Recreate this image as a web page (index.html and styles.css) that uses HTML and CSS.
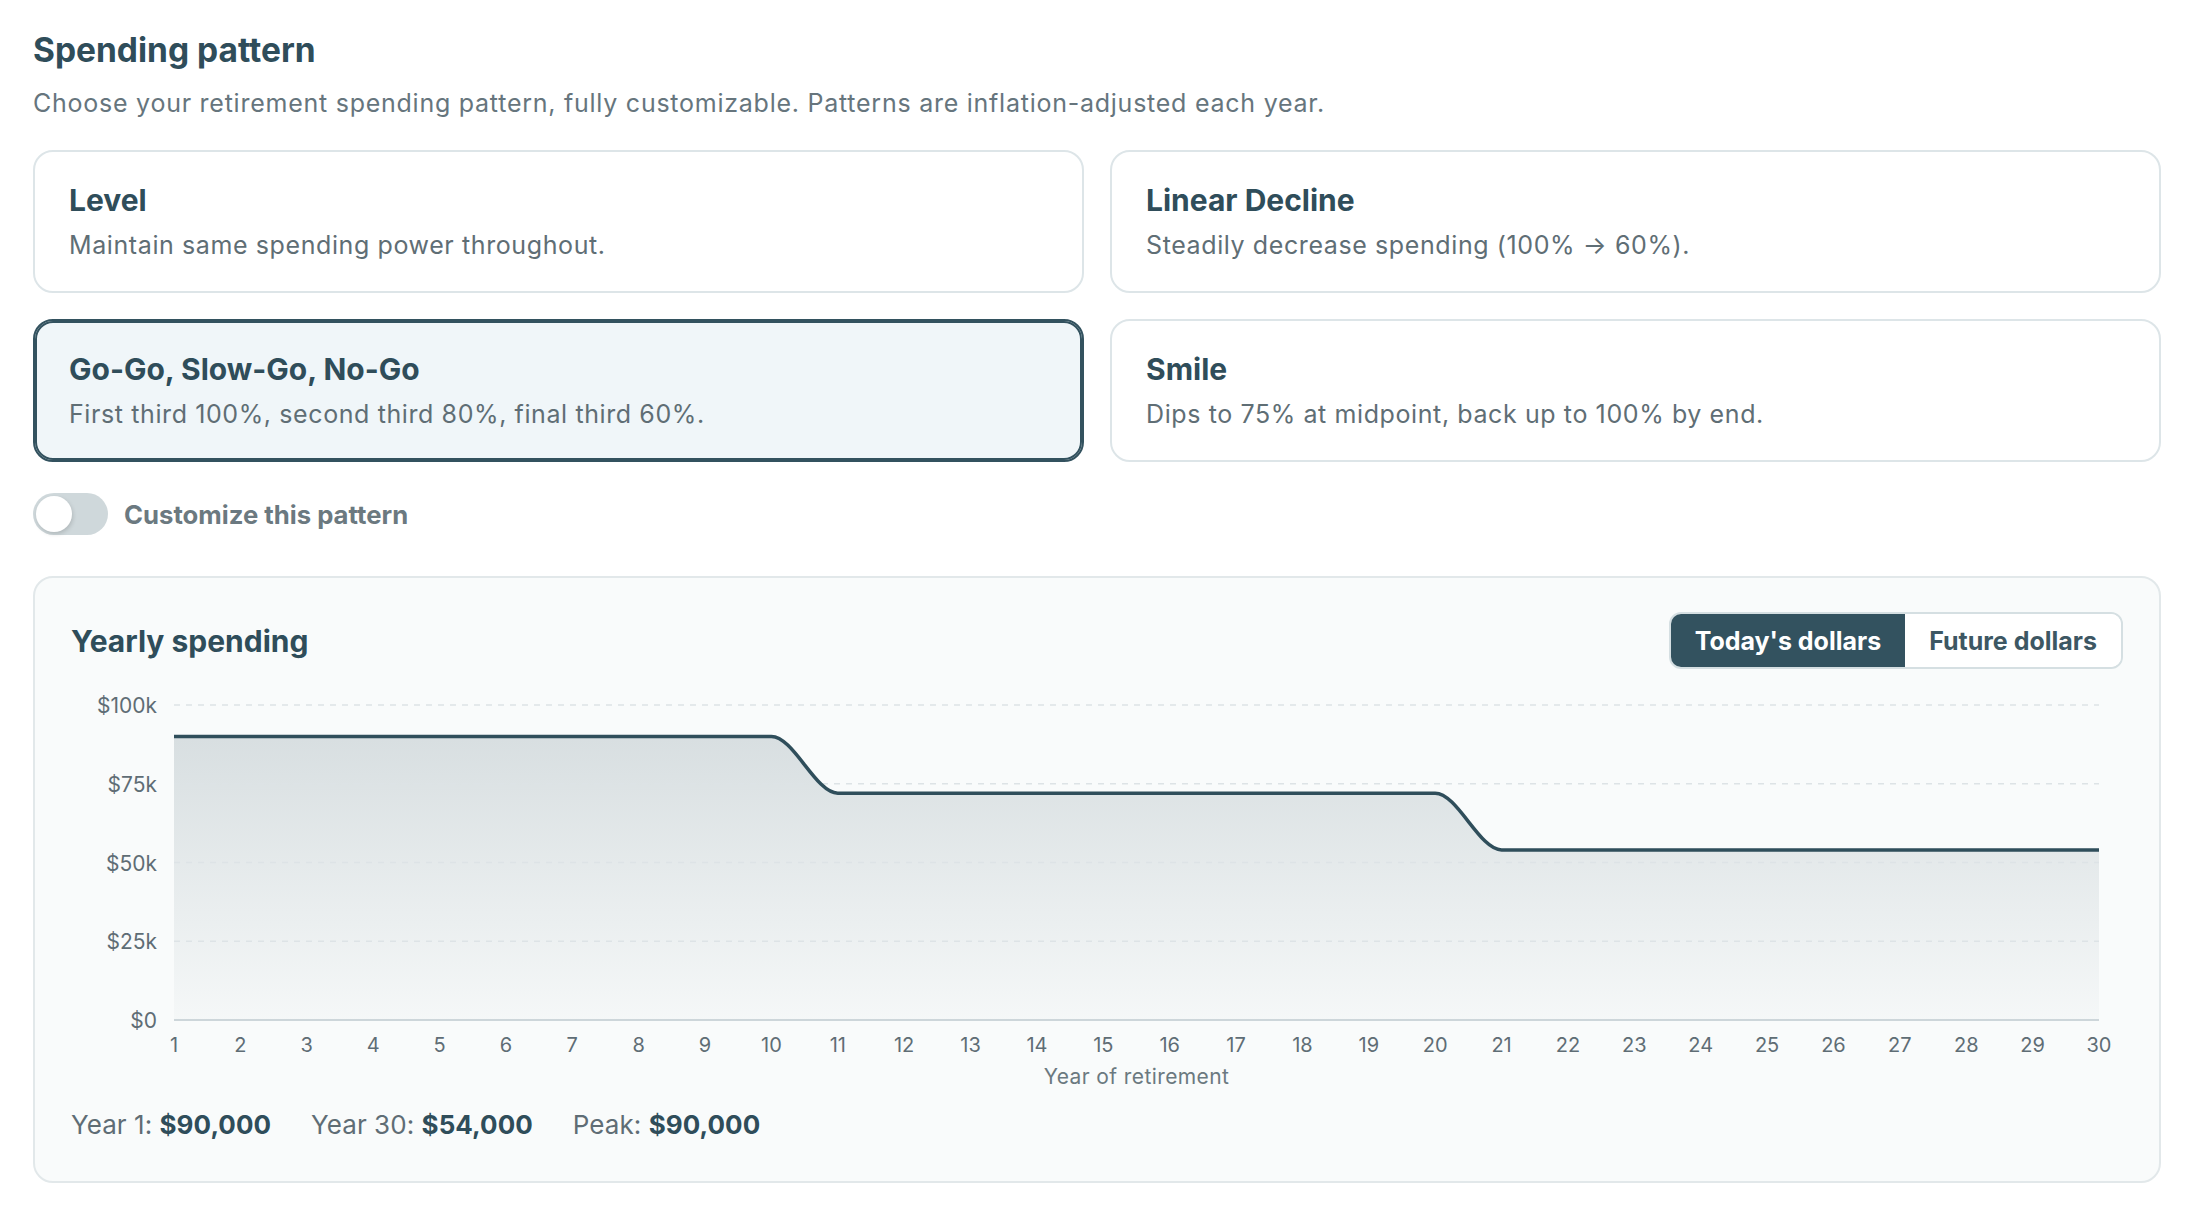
FILE: index.html
```html
<!DOCTYPE html>
<html lang="en">
<head>
    <meta charset="UTF-8">
    <meta name="viewport" content="width=device-width, initial-scale=1.0">
    <title>Spending pattern</title>
    <link rel="stylesheet" href="styles.css">
</head>
<body>
    <div class="page">
        <h2 class="section-title">Spending pattern</h2>
        <p class="section-desc">Choose your retirement spending pattern, fully customizable. Patterns are inflation-adjusted each year.</p>

        <div class="pattern-grid">
            <button class="pattern-card">
                <span class="pattern-name">Level</span>
                <span class="pattern-text">Maintain same spending power throughout.</span>
            </button>
            <button class="pattern-card">
                <span class="pattern-name">Linear Decline</span>
                <span class="pattern-text">Steadily decrease spending (100% → 60%).</span>
            </button>
            <button class="pattern-card selected">
                <span class="pattern-name">Go-Go, Slow-Go, No-Go</span>
                <span class="pattern-text">First third 100%, second third 80%, final third 60%.</span>
            </button>
            <button class="pattern-card">
                <span class="pattern-name">Smile</span>
                <span class="pattern-text">Dips to 75% at midpoint, back up to 100% by end.</span>
            </button>
        </div>

        <label class="toggle-row">
            <span class="switch"><span class="knob"></span></span>
            <span class="toggle-label">Customize this pattern</span>
        </label>

        <div class="chart-card">
            <div class="chart-header">
                <h3 class="chart-title">Yearly spending</h3>
                <div class="segmented">
                    <button class="seg-btn active">Today's dollars</button>
                    <button class="seg-btn">Future dollars</button>
                </div>
            </div>

            <svg class="chart" viewBox="0 0 2052 415" width="2052" height="415">
                <defs>
                    <linearGradient id="areaFill" x1="0" y1="24" x2="0" y2="339" gradientUnits="userSpaceOnUse">
                        <stop offset="0" stop-color="#2f4e5b" stop-opacity="0.18"/>
                        <stop offset="1" stop-color="#2f4e5b" stop-opacity="0.02"/>
                    </linearGradient>
                </defs>

                <!-- area + line, years 1-30 -->
                <path class="area" d="M103,55.5 H700.41 C722.54,55.5 744.66,112.2 766.79,112.2 H1364.21 C1386.34,112.2 1408.46,168.9 1430.59,168.9 H2028 V339 H103 Z"/>

                <g class="grid">
                    <line x1="103" x2="2028" y1="24" y2="24"/>
                    <line x1="103" x2="2028" y1="102.75" y2="102.75"/>
                    <line x1="103" x2="2028" y1="181.5" y2="181.5"/>
                    <line x1="103" x2="2028" y1="260.25" y2="260.25"/>
                </g>
                <line class="axis" x1="103" x2="2028" y1="339" y2="339"/>

                <path class="line" d="M103,55.5 H700.41 C722.54,55.5 744.66,112.2 766.79,112.2 H1364.21 C1386.34,112.2 1408.46,168.9 1430.59,168.9 H2028"/>

                <g class="y-labels">
                    <text x="86" y="32">$100k</text>
                    <text x="86" y="110.75">$75k</text>
                    <text x="86" y="189.5">$50k</text>
                    <text x="86" y="268.25">$25k</text>
                    <text x="86" y="347">$0</text>
                </g>

                <g class="x-labels">
                    <text x="103" y="371">1</text>
                    <text x="169.38" y="371">2</text>
                    <text x="235.76" y="371">3</text>
                    <text x="302.14" y="371">4</text>
                    <text x="368.52" y="371">5</text>
                    <text x="434.9" y="371">6</text>
                    <text x="501.28" y="371">7</text>
                    <text x="567.66" y="371">8</text>
                    <text x="634.03" y="371">9</text>
                    <text x="700.41" y="371">10</text>
                    <text x="766.79" y="371">11</text>
                    <text x="833.17" y="371">12</text>
                    <text x="899.55" y="371">13</text>
                    <text x="965.93" y="371">14</text>
                    <text x="1032.31" y="371">15</text>
                    <text x="1098.69" y="371">16</text>
                    <text x="1165.07" y="371">17</text>
                    <text x="1231.45" y="371">18</text>
                    <text x="1297.83" y="371">19</text>
                    <text x="1364.21" y="371">20</text>
                    <text x="1430.59" y="371">21</text>
                    <text x="1496.97" y="371">22</text>
                    <text x="1563.34" y="371">23</text>
                    <text x="1629.72" y="371">24</text>
                    <text x="1696.1" y="371">25</text>
                    <text x="1762.48" y="371">26</text>
                    <text x="1828.86" y="371">27</text>
                    <text x="1895.24" y="371">28</text>
                    <text x="1961.62" y="371">29</text>
                    <text x="2028" y="371">30</text>
                </g>
                <text class="x-title" x="1065.5" y="403">Year of retirement</text>
            </svg>

            <div class="chart-summary">
                <span>Year 1: <strong>$90,000</strong></span>
                <span>Year 30: <strong>$54,000</strong></span>
                <span>Peak: <strong>$90,000</strong></span>
            </div>
        </div>
    </div>
</body>
</html>
```

FILE: styles.css
```css
body {
    margin: 0;
    background: #fff;
    font-family: Inter, "Noto Sans", Arial, sans-serif;
    color: #2f4d5a;
}

.page {
    padding: 30px 29px 30px 33px;
}

.section-title {
    margin: 0;
    font-size: 33.5px;
    line-height: 40px;
    font-weight: 700;
    color: #2f4d5a;
}

.section-desc {
    margin: 15px 0 0;
    font-size: 25px;
    line-height: 36px;
    letter-spacing: 0.75px;
    color: #66757d;
}

.pattern-grid {
    display: grid;
    grid-template-columns: 1fr 1fr;
    gap: 26px;
    margin-top: 29px;
}

.pattern-card {
    display: flex;
    flex-direction: column;
    gap: 9px;
    height: 143px;
    padding: 30px 34px 28px;
    box-sizing: border-box;
    background: #fff;
    border: 2px solid #dde5e8;
    border-radius: 20px;
    text-align: left;
    font-family: inherit;
    cursor: pointer;
}

.pattern-card.selected {
    background: #f0f6f9;
    border-color: #33525f;
    box-shadow: inset 0 0 0 2px #33525f;
}

.pattern-name {
    font-size: 30px;
    line-height: 36px;
    font-weight: 700;
    color: #2f4d5a;
}

.pattern-text {
    font-size: 25px;
    line-height: 36px;
    letter-spacing: 0.6px;
    color: #5f6e75;
}

.toggle-row {
    display: flex;
    align-items: center;
    gap: 16px;
    margin-top: 31px;
    cursor: pointer;
}

.switch {
    position: relative;
    width: 75px;
    height: 42px;
    border-radius: 21px;
    background: #cfd8db;
}

.knob {
    position: absolute;
    left: 3px;
    top: 3px;
    width: 36px;
    height: 36px;
    border-radius: 50%;
    background: #fff;
    box-shadow: 1px 2px 4px rgba(0,0,0,0.15);
}

.toggle-label {
    font-size: 25.7px;
    font-weight: 700;
    color: #6b7980;
}

.chart-card {
    margin-top: 41px;
    padding: 34px 36px 37px;
    background: #f9fbfb;
    border: 2px solid #e2e8ea;
    border-radius: 20px;
}

.chart-header {
    display: flex;
    justify-content: space-between;
    align-items: center;
    height: 57px;
}

.chart-title {
    margin: 0;
    font-size: 30px;
    font-weight: 700;
    color: #2f4d5a;
}

.segmented {
    display: flex;
    border: 2px solid #d5dfe2;
    border-radius: 12px;
    overflow: hidden;
    background: #fff;
}

.seg-btn {
    height: 53px;
    padding: 0 24px;
    border: none;
    background: #fff;
    font-family: inherit;
    font-size: 25px;
    font-weight: 700;
    color: #3d5763;
    cursor: pointer;
}

.seg-btn.active {
    background: #33525f;
    color: #fff;
}

.chart {
    display: block;
    width: 100%;
    height: 415px;
    margin-top: 12px;
    font-family: Inter, "Noto Sans", Arial, sans-serif;
}

.chart .area {
    fill: url(#areaFill);
}

.chart .grid line {
    stroke: #dde3e6;
    stroke-width: 1.5;
    stroke-dasharray: 6 6;
}

.chart .axis {
    stroke: #cdd6da;
    stroke-width: 2;
}

.chart .line {
    fill: none;
    stroke: #2f4e5b;
    stroke-width: 3.5;
}

.y-labels text {
    font-size: 21px;
    fill: #5f6d75;
    text-anchor: end;
}

.x-labels text {
    font-size: 20px;
    fill: #5f6d75;
    text-anchor: middle;
}

.x-title {
    font-size: 21px;
    letter-spacing: 0.4px;
    fill: #6b7980;
    text-anchor: middle;
}

.chart-summary {
    display: flex;
    gap: 40px;
    margin-top: 9px;
    font-size: 26px;
    line-height: 39px;
    letter-spacing: 0.05px;
    color: #5f6d75;
}

.chart-summary strong {
    color: #2f4d5a;
    font-weight: 700;
}
```
